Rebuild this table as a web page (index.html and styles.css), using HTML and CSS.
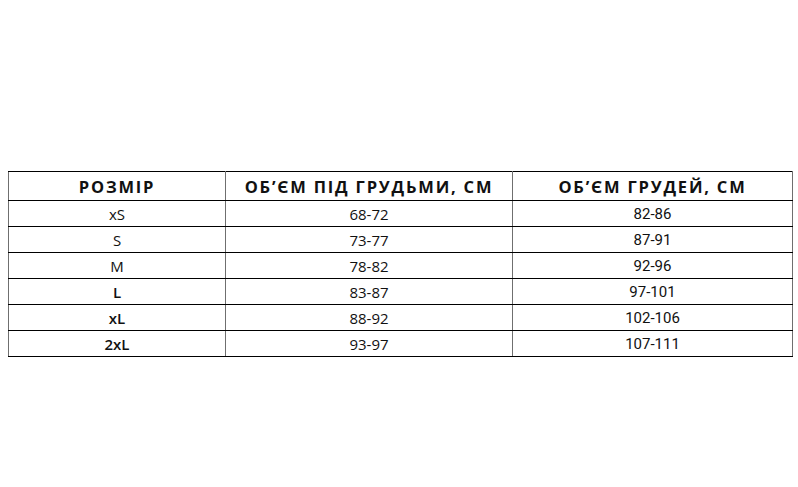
FILE: index.html
```html
<!DOCTYPE html>
<html lang="uk">
<head>
<meta charset="utf-8">
<title>Розмірна сітка</title>
<link rel="stylesheet" href="styles.css">
</head>
<body>
<div class="page">
<table class="sizes">
  <colgroup><col class="c1"><col class="c2"><col class="c3"></colgroup>
  <thead>
    <tr><th>РОЗМІР</th><th>ОБ’ЄМ ПІД ГРУДЬМИ, СМ</th><th>ОБ’ЄМ ГРУДЕЙ, СМ</th></tr>
  </thead>
  <tbody>
    <tr><td class="sz">xS</td><td class="u">68-72</td><td class="b">82-86</td></tr>
    <tr><td class="sz">S</td><td class="u">73-77</td><td class="b">87-91</td></tr>
    <tr><td class="sz">M</td><td class="u">78-82</td><td class="b">92-96</td></tr>
    <tr><td class="sz bold">L</td><td class="u">83-87</td><td class="b">97-101</td></tr>
    <tr><td class="sz bold">xL</td><td class="u">88-92</td><td class="b">102-106</td></tr>
    <tr><td class="sz bold">2xL</td><td class="u">93-97</td><td class="b">107-111</td></tr>
  </tbody>
</table>
</div>
</body>
</html>
```
FILE: styles.css
```css
html, body { margin: 0; padding: 0; background: #fff; }
.page { padding: 171px 0 0 8px; }
.sizes {
  border-collapse: collapse;
  table-layout: fixed;
  width: 784px;
  color: #111;
}
.c1 { width: 217px; }
.c2 { width: 287px; }
.c3 { width: 280px; }
.sizes th, .sizes td {
  border-top: 1px solid #000;
  border-bottom: 1px solid #000;
  border-left: 1px solid #6f6f6f;
  border-right: 1px solid #6f6f6f;
  text-align: center;
  padding: 0;
  white-space: nowrap;
}
.sizes th {
  height: 28px;
  font-family: "Open Sans", sans-serif;
  font-weight: 700;
  font-size: 16.5px;
  letter-spacing: 1.8px;
}
.sizes td { height: 25px; font-size: 15px; }
.sz { font-family: "Open Sans", sans-serif; font-weight: 500; }
.sz.bold { font-weight: 600; }
.u { font-family: "Open Sans", sans-serif; font-weight: 400; }
.b { font-family: Roboto, sans-serif; font-weight: 400; font-size: 15px; }
```
